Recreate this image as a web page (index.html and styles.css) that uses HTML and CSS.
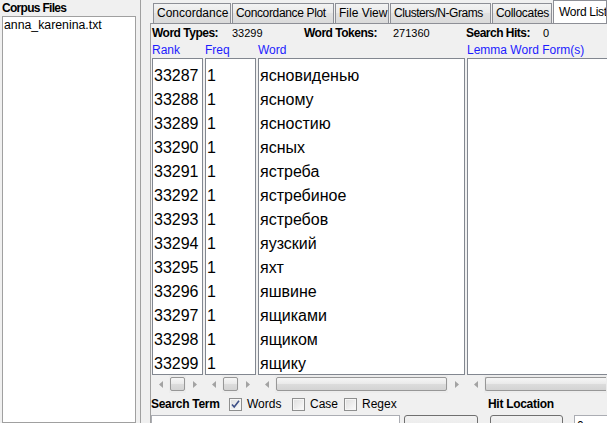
FILE: index.html
```html
<!DOCTYPE html>
<html>
<head>
<meta charset="utf-8">
<link rel="stylesheet" href="styles.css">
</head>
<body>
<div class="app">
  <aside class="corpus">
    <div class="corpus-title">Corpus Files</div>
    <div class="corpus-list"><div class="corpus-item">anna_karenina.txt</div></div>
  </aside>
  <div class="splitter"></div>
  <main class="main">
    <nav class="tabs">
      <div class="tab tab-conc">Concordance</div>
      <div class="tab tab-plot">Concordance Plot</div>
      <div class="tab tab-file">File View</div>
      <div class="tab tab-clus">Clusters/N-Grams</div>
      <div class="tab tab-coll">Collocates</div>
      <div class="tab tab-active">Word List</div>
    </nav>
    <section class="panel">
      <div class="stats">
        <b>Word Types:</b><span>33299</span>
        <b>Word Tokens:</b><span>271360</span>
        <b>Search Hits:</b><span>0</span>
      </div>
      <div class="columns">
        <div class="col">
          <div class="col-head">Rank</div>
          <div class="list">
            <div>33287</div><div>33288</div><div>33289</div><div>33290</div><div>33291</div>
            <div>33292</div><div>33293</div><div>33294</div><div>33295</div><div>33296</div>
            <div>33297</div><div>33298</div><div>33299</div>
          </div>
          <div class="hscroll">
            <div class="sb-btn"><svg width="4" height="7" viewBox="0 0 4 7"><path d="M4 0L0 3.5L4 7Z" fill="#a3a3a3"/></svg></div>
            <div class="sb-track"><div class="sb-thumb"></div></div>
            <div class="sb-btn"><svg width="4" height="7" viewBox="0 0 4 7"><path d="M0 0L4 3.5L0 7Z" fill="#a3a3a3"/></svg></div>
          </div>
        </div>
        <div class="col">
          <div class="col-head">Freq</div>
          <div class="list">
            <div>1</div><div>1</div><div>1</div><div>1</div><div>1</div>
            <div>1</div><div>1</div><div>1</div><div>1</div><div>1</div>
            <div>1</div><div>1</div><div>1</div>
          </div>
          <div class="hscroll">
            <div class="sb-btn"><svg width="4" height="7" viewBox="0 0 4 7"><path d="M4 0L0 3.5L4 7Z" fill="#a3a3a3"/></svg></div>
            <div class="sb-track"><div class="sb-thumb"></div></div>
            <div class="sb-btn"><svg width="4" height="7" viewBox="0 0 4 7"><path d="M0 0L4 3.5L0 7Z" fill="#a3a3a3"/></svg></div>
          </div>
        </div>
        <div class="col">
          <div class="col-head">Word</div>
          <div class="list">
            <div>ясновиденью</div><div>ясному</div><div>ясностию</div><div>ясных</div><div>ястреба</div>
            <div>ястребиное</div><div>ястребов</div><div>яузский</div><div>яхт</div><div>яшвине</div>
            <div>ящиками</div><div>ящиком</div><div>ящику</div>
          </div>
          <div class="hscroll">
            <div class="sb-btn"><svg width="4" height="7" viewBox="0 0 4 7"><path d="M4 0L0 3.5L4 7Z" fill="#a3a3a3"/></svg></div>
            <div class="sb-track"><div class="sb-thumb"></div></div>
            <div class="sb-btn"><svg width="4" height="7" viewBox="0 0 4 7"><path d="M0 0L4 3.5L0 7Z" fill="#a3a3a3"/></svg></div>
          </div>
        </div>
        <div class="col">
          <div class="col-head">Lemma Word Form(s)</div>
          <div class="list list-open"></div>
          <div class="hscroll">
            <div class="sb-btn"><svg width="4" height="7" viewBox="0 0 4 7"><path d="M4 0L0 3.5L4 7Z" fill="#a3a3a3"/></svg></div>
            <div class="sb-track"><div class="sb-thumb sb-thumb-open"></div></div>
          </div>
        </div>
      </div>
      <div class="bottom">
        <div class="search">
          <div class="search-row">
            <b class="search-label">Search Term</b>
            <label class="opt opt-words"><span class="cb"><svg width="11" height="11" viewBox="0 0 11 11"><path d="M2 5.5L4.2 8L9 1.8" fill="none" stroke="#3d4f86" stroke-width="1.6"/></svg></span>Words</label>
            <label class="opt opt-case"><span class="cb"></span>Case</label>
            <label class="opt"><span class="cb"></span>Regex</label>
          </div>
          <div class="input-row">
            <div class="field"></div>
            <div class="btn"></div>
          </div>
        </div>
        <div class="hit">
          <div class="search-row"><b class="hit-label">Hit Location</b></div>
          <div class="input-row hit-row">
            <div class="btn"></div>
            <div class="spin">0</div>
          </div>
        </div>
      </div>
    </section>
  </main>
</div>
</body>
</html>
```

FILE: styles.css
```css
html, body {
  margin: 0;
  padding: 0;
}
body {
  width: 607px;
  height: 423px;
  overflow: hidden;
  background: #f0f0f0;
  font-family: "Liberation Sans", Arial, sans-serif;
  font-size: 12px;
  color: #000;
}
.app {
  display: flex;
  height: 423px;
  overflow: hidden;
}
.corpus {
  width: 137px;
  flex: none;
  display: flex;
  flex-direction: column;
}
.corpus-title {
  height: 16px;
  line-height: 17px;
  padding-left: 2px;
  font-weight: bold;
  font-size: 12px;
  letter-spacing: -0.7px;
}
.corpus-list {
  margin-left: 2px;
  width: 134px;
  height: 420px;
  box-sizing: border-box;
  background: #fff;
  border: 1px solid #a0a0a0;
}
.corpus-item {
  padding-left: 1px;
  line-height: 17px;
  font-size: 12.3px;
}
.splitter {
  width: 9px;
  flex: none;
  margin-left: 3px;
  border-left: 1px solid #a0a0a0;
}
.main {
  flex: 1;
  min-width: 0;
  display: flex;
  flex-direction: column;
}
.tabs {
  height: 24px;
  display: flex;
  align-items: flex-end;
  gap: 1px;
  padding-left: 3px;
  white-space: nowrap;
}
.tab {
  flex: none;
  height: 20px;
  box-sizing: border-box;
  border: 1px solid #8d8f96;
  border-bottom: none;
  padding: 0 0 0 3px;
  line-height: 19px;
  font-size: 12px;
  overflow: hidden;
  background: linear-gradient(#f3f3f3, #e9e9e9 50%, #e1e1e1 50%, #dadada);
}
.tab-conc { width: 78px; }
.tab-plot { width: 102px; letter-spacing: -0.35px; }
.tab-file { width: 54px; }
.tab-clus { width: 101px; letter-spacing: -0.45px; }
.tab-coll { width: 60px; letter-spacing: -0.3px; }
.tab-active {
  flex: 1;
  height: 23px;
  background: #fff;
  padding: 0 0 0 5px;
  line-height: 22px;
  letter-spacing: -0.3px;
}
.panel {
  flex: 1;
  border-top: 1px solid #8d8f96;
  border-left: 1px solid #a0a0a0;
  padding-left: 1px;
}
.stats {
  display: grid;
  grid-template-columns: 80px 72px 89px 73px 77px auto;
  height: 19px;
  line-height: 19px;
  font-size: 11px;
  white-space: nowrap;
}
.stats b {
  font-size: 12px;
  letter-spacing: -0.5px;
}
.columns {
  display: grid;
  grid-template-columns: 51px 51px 207px 1fr;
  column-gap: 2px;
}
.col {
  min-width: 0;
}
.col-head {
  height: 15px;
  line-height: 15px;
  color: #1c1cff;
  font-size: 12px;
  white-space: nowrap;
}
.list {
  height: 317px;
  box-sizing: border-box;
  border: 1px solid #828790;
  background: #fff;
  padding: 5px 0 0 1px;
  overflow: hidden;
  font-size: 16px;
  line-height: 24px;
  white-space: nowrap;
}
.list-open {
  border-right: none;
}
.hscroll {
  height: 18px;
  display: flex;
}
.sb-btn {
  width: 17px;
  flex: none;
  display: flex;
  align-items: center;
  justify-content: center;
}
.sb-track {
  flex: 1;
  padding: 2px 1px 2px 1px;
  background: #ececec;
}
.sb-thumb {
  height: 14px;
  box-sizing: border-box;
  border: 1px solid #979797;
  border-radius: 2px;
  background: linear-gradient(#f6f6f6, #e9e9e9 50%, #dcdcdc 50%, #d3d3d3);
}
.sb-thumb-open {
  border-right: none;
  border-radius: 2px 0 0 2px;
}
.bottom {
  display: grid;
  grid-template-columns: 337px 1fr;
  margin-left: -1px;
}
.search-row {
  height: 22px;
  display: flex;
  align-items: center;
  white-space: nowrap;
}
.search-label,
.hit-label {
  font-weight: bold;
  font-size: 12px;
  letter-spacing: -0.3px;
}
.search-label {
  width: 78px;
}
.opt {
  display: flex;
  align-items: center;
  gap: 5px;
  font-size: 12px;
}
.opt-words {
  width: 63px;
}
.opt-case {
  width: 52px;
}
.cb {
  width: 13px;
  height: 13px;
  box-sizing: border-box;
  border: 1px solid #8e8f8f;
  background: linear-gradient(135deg, #dedede, #fbfbfb);
  box-shadow: inset 0 0 0 1px #f6f6f6;
  display: flex;
  align-items: center;
  justify-content: center;
}
.input-row {
  display: flex;
  gap: 4px;
  height: 24px;
}
.field {
  width: 249px;
  height: 22px;
  box-sizing: border-box;
  border: 1px solid #abadb3;
  background: #fff;
}
.btn {
  width: 74px;
  height: 22px;
  box-sizing: border-box;
  border: 1px solid #707070;
  border-radius: 3px;
  background: linear-gradient(#f2f2f2, #ebebeb 50%, #dddddd 50%, #cfcfcf);
}
.hit-row {
  padding-left: 2px;
  gap: 11px;
}
.hit-row .btn {
  width: 73px;
}
.spin {
  width: 40px;
  height: 22px;
  box-sizing: border-box;
  border: 1px solid #abadb3;
  background: #fff;
  padding-left: 2px;
  line-height: 20px;
  font-size: 12px;
}
```
